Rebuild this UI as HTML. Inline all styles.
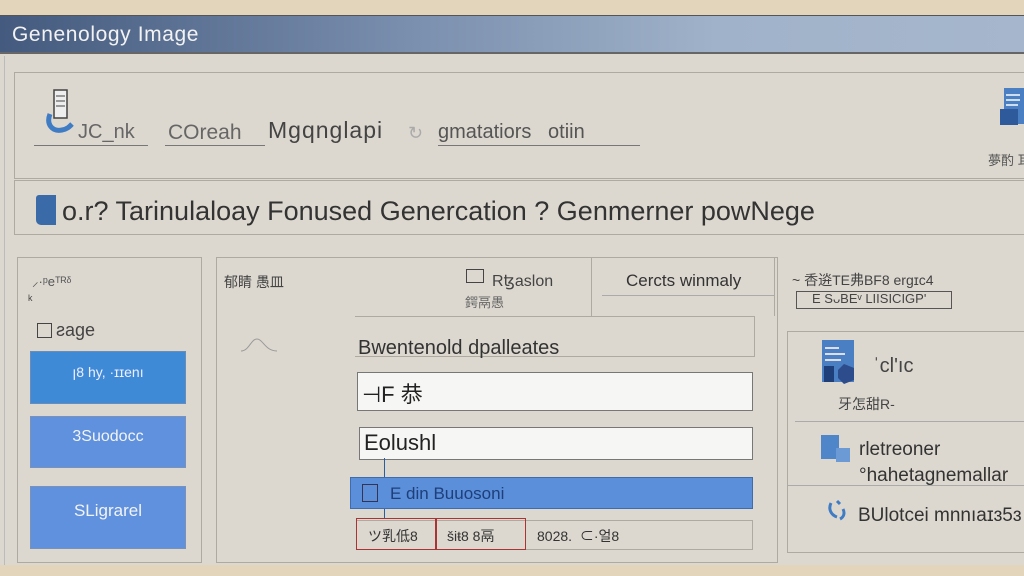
<!DOCTYPE html>
<html><head><meta charset="utf-8"><style>
*{margin:0;padding:0;box-sizing:border-box}
body{width:1024px;height:576px;overflow:hidden;background:#dcd8cf;font-family:"Liberation Sans","Noto Sans CJK SC",sans-serif;position:relative;color:#3a3a3a}
.a{position:absolute;white-space:nowrap}
.box{position:absolute;border:1px solid #aeaaa2}
</style></head><body>
<div class="a" style="left:0;top:0;width:1024px;height:15px;background:#e2d5bc"></div>
<div class="a" style="left:0;top:15px;width:1024px;height:39px;background:linear-gradient(90deg,#445a7e 0%,#7a8fae 40%,#a0b2c9 70%,#a6b7cd 100%);border-top:1px solid #555;border-bottom:2px solid #666"></div>
<div class="a" style="left:12px;top:23px;font-size:21px;color:#f2f2f2;letter-spacing:0.6px">Genenology Image</div>
<div class="a" style="left:0;top:565px;width:1024px;height:11px;background:#e2d5bc"></div>
<div class="a" style="left:4px;top:56px;width:1px;height:509px;background:#bbb"></div>

<div class="box" style="left:14px;top:72px;width:1020px;height:107px"></div>
<svg class="a" style="left:44px;top:88px" width="34" height="52"><rect x="10" y="2" width="13" height="28" fill="#eee" stroke="#444" stroke-width="1.5"/><path d="M12 8h9M12 13h9M12 18h9" stroke="#444"/><path d="M6 26c-4 10 2 18 12 16 6-1 8-4 10-6" stroke="#3f7cc4" stroke-width="5" fill="none"/></svg>
<div class="a" style="left:34px;top:145px;width:114px;height:1px;background:#777"></div>
<div class="a" style="left:78px;top:121px;font-size:20px;color:#666">JC_nk</div>
<div class="a" style="left:168px;top:121px;font-size:21px;color:#666">COreah</div>
<div class="a" style="left:165px;top:145px;width:100px;height:1px;background:#777"></div>
<div class="a" style="left:268px;top:117px;font-size:23px;color:#444;letter-spacing:1px">Mgqnglapi</div>
<div class="a" style="left:408px;top:123px;font-size:18px;color:#aaa">↻</div>
<div class="a" style="left:438px;top:121px;font-size:20px;color:#555">gmatatiors &nbsp;&nbsp;otiin</div>
<div class="a" style="left:438px;top:145px;width:202px;height:1px;background:#777"></div>
<svg class="a" style="left:998px;top:87px" width="26" height="52"><rect x="6" y="1" width="20" height="36" fill="#4a7fc4"/><path d="M8 8h14M8 13h14M8 18h12" stroke="#cde" stroke-width="2"/><rect x="2" y="22" width="18" height="16" fill="#2e5a9c"/></svg>
<div class="a" style="left:988px;top:150px;font-size:13px;color:#555">夢酌 耳</div>

<div class="box" style="left:14px;top:180px;width:1020px;height:55px"></div>
<div class="a" style="left:36px;top:195px;width:20px;height:30px;background:#3a6aa8;border-radius:3px 0 0 5px"></div>
<div class="a" style="left:62px;top:196px;font-size:27px;color:#333">o.r? Tarinulaloay Fonused Genercation ? Genmerner powNege</div>

<div class="box" style="left:17px;top:257px;width:185px;height:306px"></div>
<div class="a" style="left:32px;top:272px;font-size:13px;color:#555">⸝·ᵖeᵀᴿᵟ</div>
<div class="a" style="left:28px;top:292px;font-size:13px;color:#444">ᵏ</div>
<div class="a" style="left:37px;top:323px;width:15px;height:15px;border:1px solid #444"></div>
<div class="a" style="left:56px;top:320px;font-size:18px;color:#444">ƨaɡe</div>
<div class="a" style="left:30px;top:351px;width:156px;height:53px;background:#3f8ad6;border:1px solid #6a8cb8;color:#eef;font-size:14px;text-align:center;line-height:40px">ꞁ8 hy, ·ɪɪenı</div>
<div class="a" style="left:30px;top:416px;width:156px;height:52px;background:#5f91de;border:1px solid #7a92b8;color:#f3f3f3;font-size:16px;text-align:center;line-height:40px">3Suodocc</div>
<div class="a" style="left:30px;top:486px;width:156px;height:63px;background:#5f91de;border:1px solid #7a92b8;color:#f3f3f3;font-size:17px;text-align:center;line-height:48px">SLigrarel</div>

<div class="box" style="left:216px;top:257px;width:562px;height:306px"></div>
<div class="a" style="left:224px;top:272px;font-size:14px;color:#444">郁睛 愚皿</div>
<svg class="a" style="left:240px;top:335px" width="40" height="20"><path d="M1 16c8 0 10-12 16-12s8 12 20 12" stroke="#999" fill="none"/></svg>
<div class="a" style="left:466px;top:269px;width:18px;height:14px;border:1px solid #444"></div>
<div class="a" style="left:492px;top:271px;font-size:16px;color:#444">Rꜩaslon</div>
<div class="a" style="left:465px;top:292px;font-size:13px;color:#666">鍔鬲愚</div>
<div class="a" style="left:591px;top:258px;width:184px;height:58px;border:1px solid #aeaaa2;border-top:none;border-bottom:none"></div>
<div class="a" style="left:602px;top:295px;width:172px;height:1px;background:#aaa"></div>
<div class="a" style="left:626px;top:271px;font-size:17px;color:#333">Cercts winmaly</div>
<div class="a" style="left:355px;top:316px;width:400px;height:41px;border:1px solid #aeaaa2;border-left:none"></div>
<div class="a" style="left:358px;top:337px;font-size:20px;color:#333">Bwentenold dpalleates</div>
<div class="a" style="left:357px;top:372px;width:396px;height:39px;background:#f6f6f4;border:1.5px solid #777"></div>
<div class="a" style="left:362px;top:377px;font-size:22px;color:#222">⊣F 恭</div>
<div class="a" style="left:359px;top:427px;width:394px;height:33px;background:#f6f6f4;border:1.5px solid #777"></div>
<div class="a" style="left:364px;top:430px;font-size:22px;color:#222">Eolushl</div>
<div class="a" style="left:384px;top:458px;width:1px;height:60px;background:#2c5e9e"></div>
<div class="a" style="left:350px;top:477px;width:403px;height:32px;background:#5b8fda;border:1px solid #3d6db0"></div>
<div class="a" style="left:362px;top:484px;width:16px;height:18px;border:1.5px solid #335"></div>
<div class="a" style="left:390px;top:484px;font-size:17px;color:#1e3f7a">E din Buuosoni</div>
<div class="a" style="left:356px;top:520px;width:397px;height:30px;border:1px solid #aeaaa2"></div>
<div class="a" style="left:356px;top:518px;width:80px;height:32px;border:1px solid #a33"></div>
<div class="a" style="left:436px;top:518px;width:90px;height:32px;border:1px solid #a33"></div>
<div class="a" style="left:368px;top:526px;font-size:14px;color:#333">ツ乳低8</div>
<div class="a" style="left:447px;top:526px;font-size:14px;color:#333">šiŧ8 8鬲</div>
<div class="a" style="left:537px;top:526px;font-size:14px;color:#333">8028. &nbsp;⊂·얼8</div>

<div class="a" style="left:792px;top:270px;font-size:14px;color:#444">~ 㕿䢠TE弗BF8 erɡɪc4</div>
<div class="a" style="left:796px;top:291px;width:156px;height:18px;border:1px solid #555"></div>
<div class="a" style="left:812px;top:291px;font-size:13px;color:#444">E SᴗBEᵛ LIISICIGP'</div>
<div class="box" style="left:787px;top:331px;width:240px;height:222px"></div>
<div class="a" style="left:795px;top:421px;width:230px;height:1px;background:#aaa"></div>
<div class="a" style="left:787px;top:485px;width:237px;height:1px;background:#aaa"></div>
<svg class="a" style="left:820px;top:338px" width="44" height="46"><rect x="2" y="2" width="32" height="42" fill="#4a7fc4"/><path d="M5 10h14M5 16h20M5 22h16" stroke="#dde" stroke-width="2"/><rect x="4" y="28" width="10" height="16" fill="#1f3f7a"/><path d="M24 26l10 4v12l-10 4-6-6v-8z" fill="#2c4c8c"/></svg>
<div class="a" style="left:873px;top:355px;font-size:20px;color:#444">ˈcl'ıc</div>
<div class="a" style="left:838px;top:394px;font-size:14px;color:#444">牙怎甜R-</div>
<svg class="a" style="left:820px;top:434px" width="34" height="32"><rect x="1" y="1" width="18" height="24" fill="#4f86ca"/><rect x="16" y="14" width="14" height="14" fill="#6b9ad4"/></svg>
<div class="a" style="left:859px;top:439px;font-size:19px;color:#333">rletreoner</div>
<div class="a" style="left:859px;top:465px;font-size:19px;color:#333">°hahetagnemallar</div>
<svg class="a" style="left:827px;top:497px" width="24" height="28"><path d="M4 6c-3 6 0 12 6 14M10 4l3 3M16 12c2 4 1 8-3 10" stroke="#3f7cc4" stroke-width="3" fill="none"/></svg>
<div class="a" style="left:858px;top:505px;font-size:19px;color:#333">BUlotcei mnnıaɪɜ5ɜ</div>
</body></html>
